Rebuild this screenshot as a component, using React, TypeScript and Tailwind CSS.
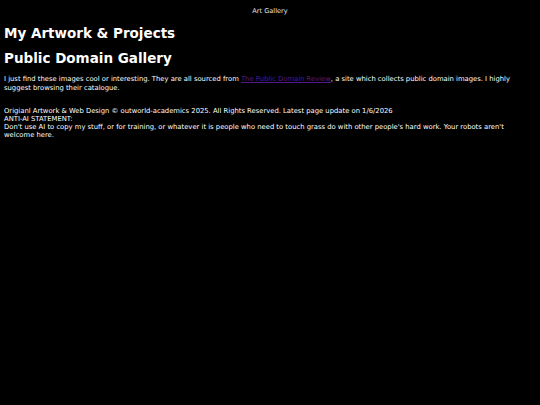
export default function App() {
  return (
    <div className="min-h-[405px] bg-black text-white font-['DejaVu_Sans',sans-serif] px-1">
      <nav className="pt-[6px] text-center text-[6.6px] leading-[10px] text-gray-200">Art Gallery</nav>
      <h1 className="mt-[8px] text-[13.5px] font-bold leading-[18px]">My Artwork &amp; Projects</h1>
      <h2 className="mt-[7px] text-[13.5px] font-bold leading-[18px]">Public Domain Gallery</h2>
      <p className="mt-[8px] text-[6.8px] leading-[9px]">
        I just find these images cool or interesting. They are all sourced from{" "}
        <a href="#" className="text-[#551a8b] underline">The Public Domain Review</a>, a site which collects public domain
        images. I highly suggest browsing their catalogue.
      </p>
      <footer className="mt-[14px] text-[6.8px] leading-[8px]">
        <p>Origianl Artwork &amp; Web Design © outworld-academics 2025. All Rights Reserved. Latest page update on 1/6/2026</p>
        <p>ANTI-AI STATEMENT:</p>
        <p>
          Don't use AI to copy my stuff, or for training, or whatever it is people who need to touch grass do with other
          people's hard work. Your robots aren't welcome here.
        </p>
      </footer>
    </div>
  );
}
